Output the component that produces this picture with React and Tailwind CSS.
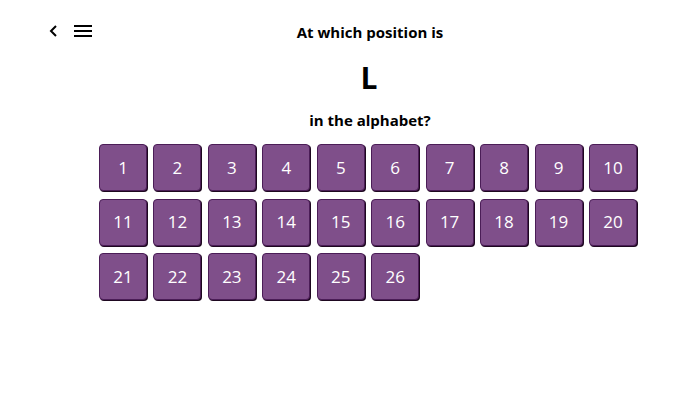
import React from "react";

export default function App() {
  const nums = Array.from({ length: 26 }, (_, i) => i + 1);
  return (
    <div className="w-[700px] h-[400px] bg-white relative" style={{ fontFamily: '"Open Sans", "Noto Sans", sans-serif' }}>
      <div className="absolute left-[48px] top-[22px] flex items-center gap-[14px]">
        <svg width="12" height="18" viewBox="0 0 12 18">
          <path d="M8 4 L3 9 L8 14" stroke="black" strokeWidth="2" fill="none" />
        </svg>
        <svg width="18" height="14" viewBox="0 0 18 14">
          <rect x="0" y="1" width="18" height="2" fill="black" />
          <rect x="0" y="6" width="18" height="2" fill="black" />
          <rect x="0" y="11" width="18" height="2" fill="black" />
        </svg>
      </div>
      <div className="pl-[36px] flex flex-col items-center">
        <div className="ml-[4px] mt-[22px] text-[15px] font-bold leading-[20px] text-black">At which position is</div>
        <div className="ml-[2px] mt-[18px] text-[30px] font-bold leading-[36px] text-black">L</div>
        <div className="ml-[4px] mt-[14px] text-[15px] font-bold leading-[20px] text-black">in the alphabet?</div>
        <div className="mt-[14px] grid grid-cols-10 gap-x-[6.4px] gap-y-[7.5px] w-[538px]">
          {nums.map((n) => (
            <div
              key={n}
              className="h-[47px] w-[48px] rounded-[4px] border border-[#4b1d57] bg-[#7f4f8a] shadow-[1px_1px_0_#1e0820] flex items-center justify-center text-white text-[17px]"
            >
              {n}
            </div>
          ))}
        </div>
      </div>
    </div>
  );
}
